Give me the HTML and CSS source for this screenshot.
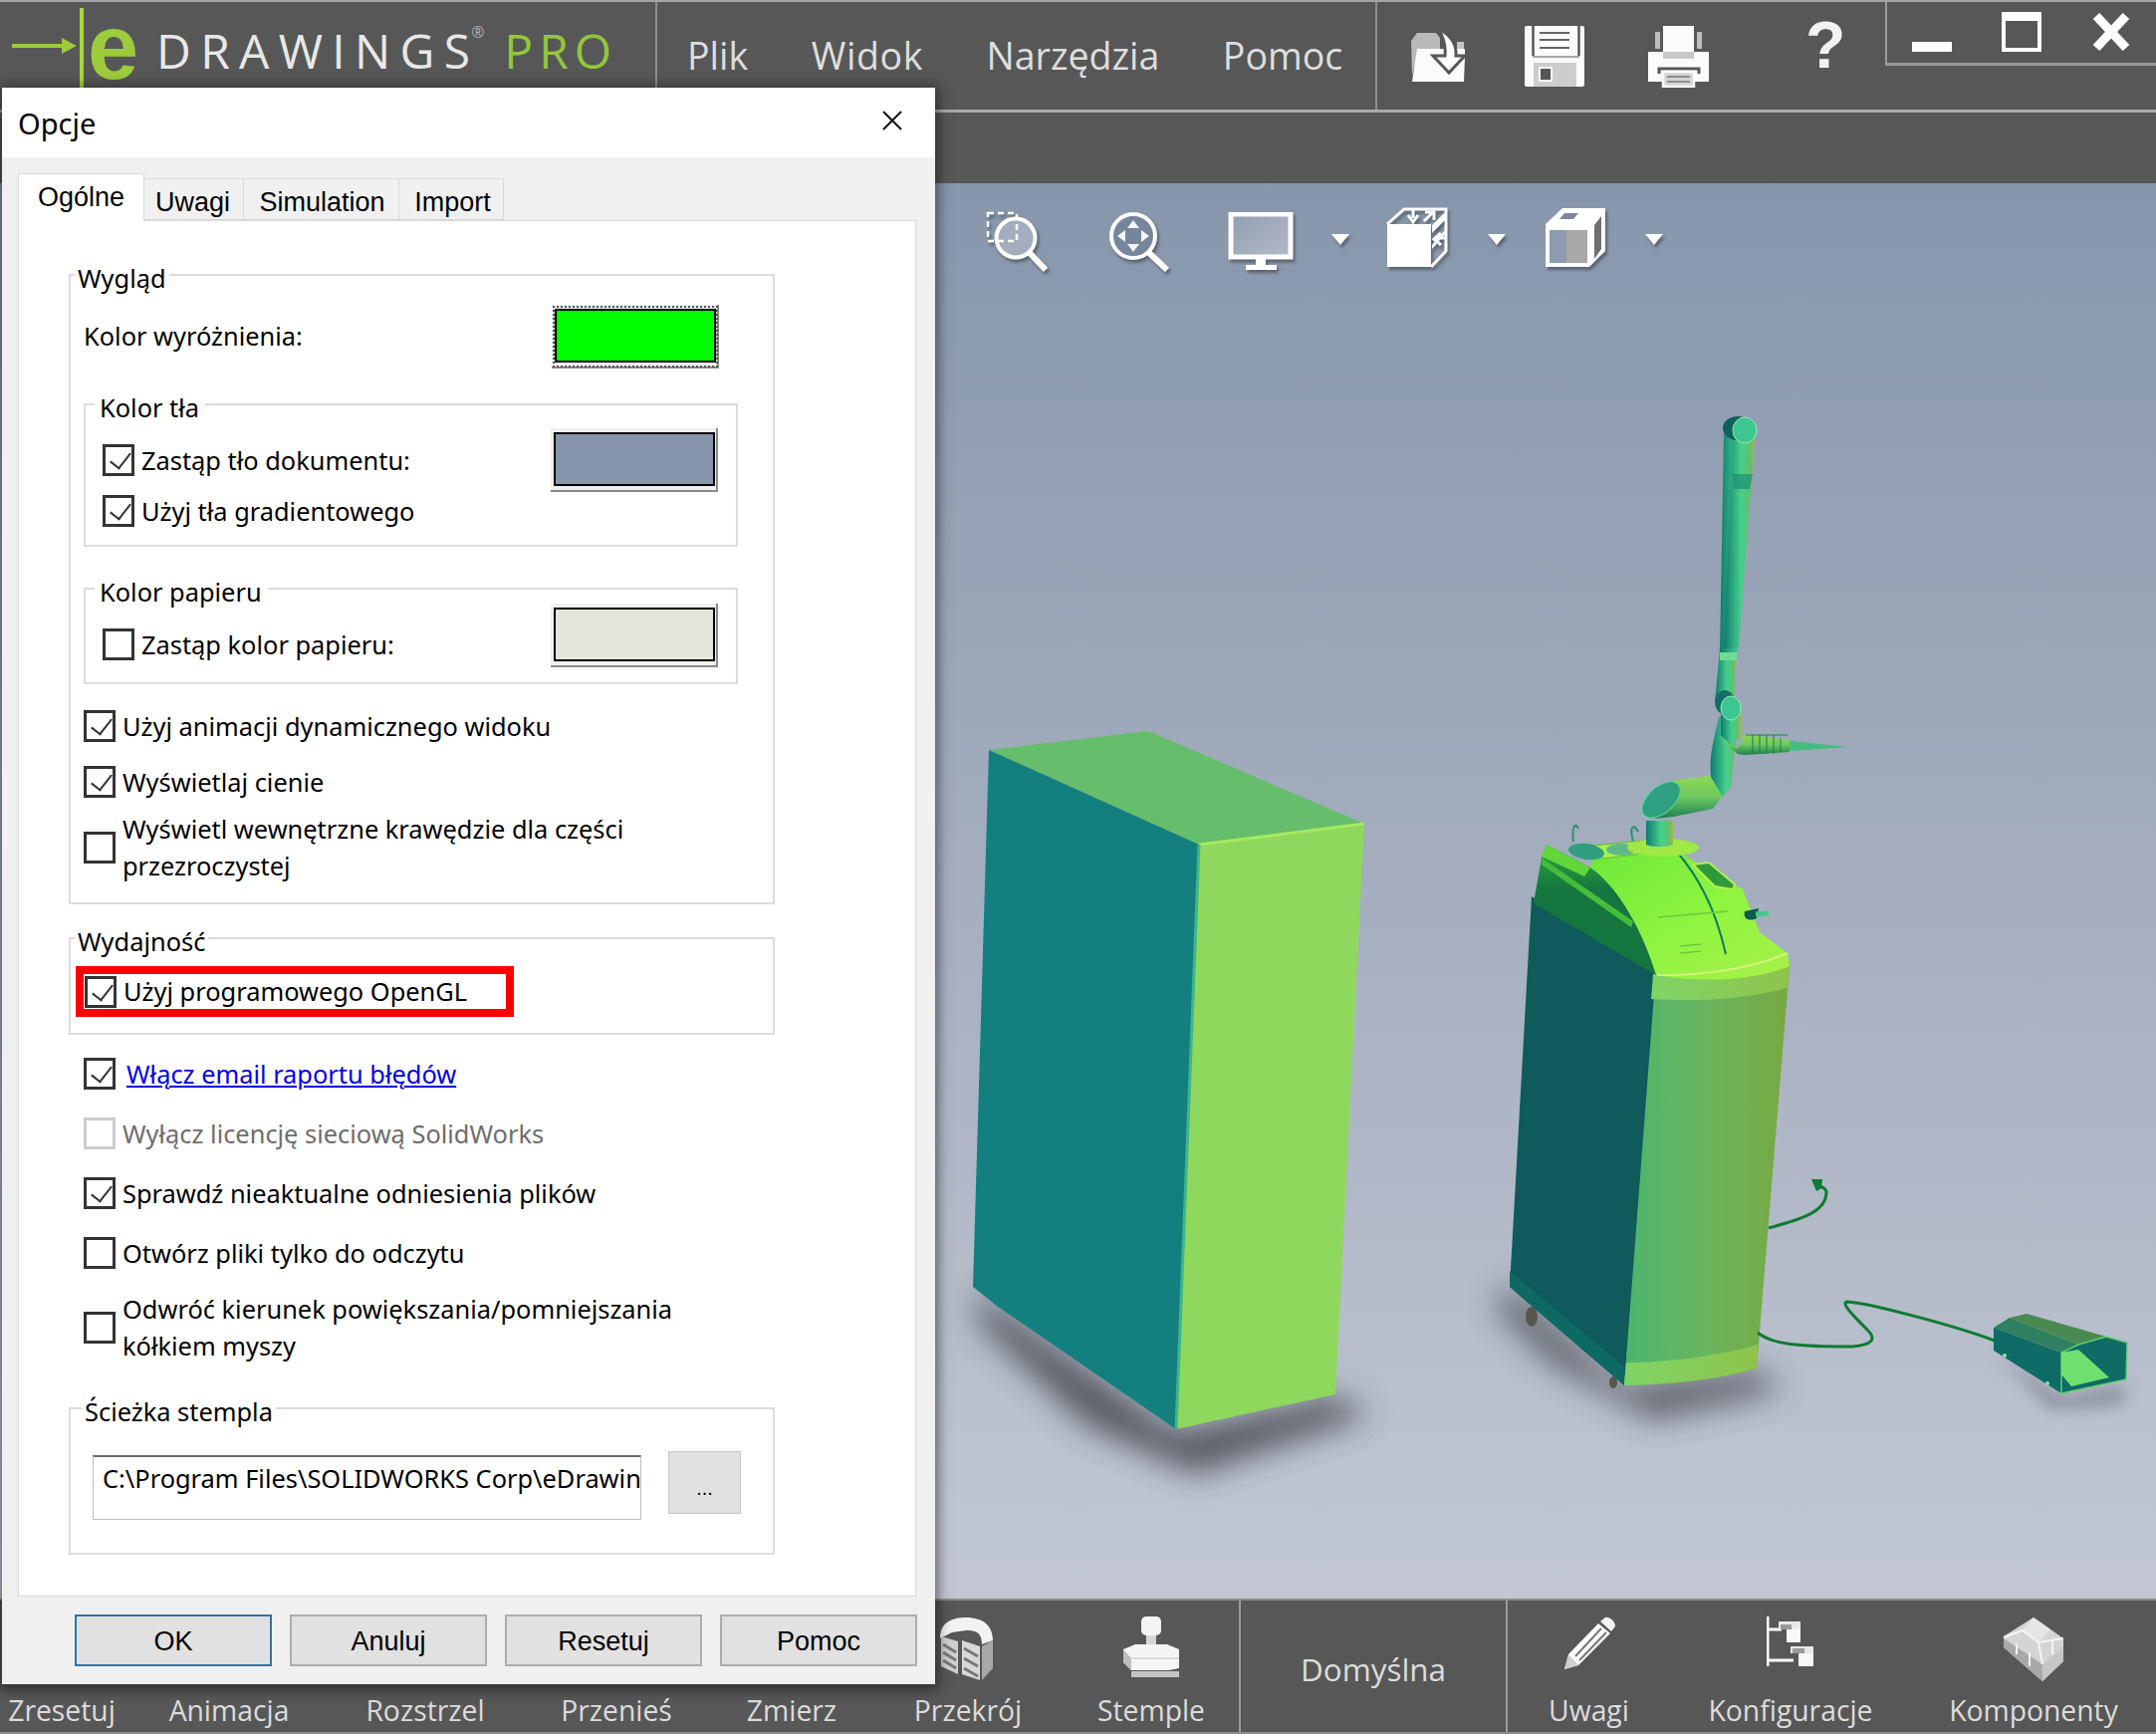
FILE: index.html
```html
<!DOCTYPE html>
<html lang="pl">
<head>
<meta charset="utf-8">
<title>eDrawings Pro - Opcje</title>
<link rel="stylesheet" href="styles.css">
</head>
<body>
<div class="app">
  <header class="topbar">
    <div class="logo">
      <svg class="logo-mark" width="74" height="82" viewBox="0 0 74 82"><path d="M0 38H54" stroke="#9ccb3b" stroke-width="4"/><path d="M50 30L65 38L50 46Z" fill="#9ccb3b"/><path d="M70 0V82" stroke="#a4d63e" stroke-width="4"/></svg>
      <span class="logo-e">e</span>
      <span class="logo-name">DRAWINGS</span><sup class="logo-reg">®</sup>
      <span class="logo-pro">PRO</span>
    </div>
    <nav class="menu"><span>Plik</span><span class="menu-wide">Widok</span><span>Narzędzia</span><span>Pomoc</span></nav>
    <div class="quick">
      <svg class="q-open" width="60" height="56" viewBox="0 0 60 56"><path d="M2 13L8 5H27L31 10V24H9L3 48Z" fill="#b9b9b9"/><path d="M48 14H55V22H48Z" fill="#c4c4c4"/><path d="M3 54L8 21H56V30L55 54Z" fill="#fbfbfb"/><path d="M29 1C41 6 48 16 47 28H56L40 45L24 28H36C37 18 34 8 29 1Z" fill="#fff" stroke="#575757" stroke-width="3"/></svg>
      <svg class="q-save" width="62" height="62" viewBox="0 0 62 62"><path d="M3 0H59Q61 0 61 2V59Q61 61 59 61H3Q1 61 1 59V2Q1 0 3 0Z" fill="#fbfbfb"/><path d="M9.500 0V30M55.500 0V30" stroke="#575757" stroke-width="2.500"/><path d="M16 7H46M16 14H46M16 22H46" stroke="#666" stroke-width="2"/><path d="M9 31H56" stroke="#8a8a8a" stroke-width="1.500"/><path d="M10 37H53V61H10Z" fill="#cdcdcd"/><path d="M15 41H29V56H15Z" fill="#fff"/><path d="M17 43H27V54H17Z" fill="#555"/></svg>
      <svg class="q-print" width="62" height="62" viewBox="0 0 62 62"><path d="M7 6H12V23H7ZM49 6H54V23H49Z" fill="#bdbdbd"/><path d="M15 0H46V26H15Z" fill="#fbfbfb"/><path d="M0 26H61V56H0Z" fill="#fbfbfb"/><path d="M15 26H46V33H15Z" fill="#c8c8c8"/><path d="M11 48V43H51V48" fill="none" stroke="#575757" stroke-width="3"/><path d="M15 46H46V61H15Z" fill="#d4d4d4" stroke="#fbfbfb" stroke-width="2.500"/><path d="M19 51H42M19 56H42" stroke="#777" stroke-width="1.500"/></svg>
      <span class="q-help">?</span>
    </div>
    <div class="winbox">
      <span class="win-min"></span>
      <span class="win-max"></span>
      <svg class="win-close" width="40" height="38" viewBox="0 0 40 38"><path d="M5 3L35 35M35 3L5 35" stroke="#fff" stroke-width="9"/></svg>
    </div>
  </header>
  <div class="subbar"></div>
  <main class="viewport">
    <svg class="scene" width="2165" height="1421" viewBox="0 184 2165 1421">
      <defs>
        <filter id="blur18" x="-30%" y="-60%" width="160%" height="220%"><feGaussianBlur stdDeviation="16"/></filter>
        <filter id="blur8" x="-30%" y="-60%" width="160%" height="220%"><feGaussianBlur stdDeviation="8"/></filter>
        <linearGradient id="bodyG" x1="0" y1="0" x2="1" y2="0"><stop offset="0" stop-color="#4cb56e"/><stop offset=".5" stop-color="#6ab55e"/><stop offset="1" stop-color="#79a840"/></linearGradient>
        <linearGradient id="trimG" x1="0" y1="0" x2="1" y2="0"><stop offset="0" stop-color="#7fd466"/><stop offset="1" stop-color="#8fc44c"/></linearGradient>
        <linearGradient id="headG" x1="0" y1="0" x2="1" y2="1"><stop offset="0" stop-color="#6fe83a"/><stop offset=".55" stop-color="#8ff540"/><stop offset="1" stop-color="#a9f04a"/></linearGradient>
        <linearGradient id="sideG" x1="0" y1="0" x2="0" y2="1"><stop offset="0" stop-color="#2fa83c"/><stop offset=".35" stop-color="#14763e"/><stop offset="1" stop-color="#14763e"/></linearGradient>
        <linearGradient id="pipeG" x1="0" y1="0" x2="1" y2="0"><stop offset="0" stop-color="#0f7a70"/><stop offset=".55" stop-color="#45cf8c"/><stop offset=".85" stop-color="#5fc070"/><stop offset="1" stop-color="#a8b83a"/></linearGradient>
        <linearGradient id="pipeH" x1="0" y1="0" x2="0" y2="1"><stop offset="0" stop-color="#8fd858"/><stop offset=".5" stop-color="#6fc85e"/><stop offset="1" stop-color="#1b7f52"/></linearGradient>
      </defs>
      <path d="M979 1296L1181 1437L1341 1402L1375 1420L1200 1480L1090 1430L985 1330Z" fill="#3a3d45" opacity=".8" filter="url(#blur18)"/>
      <path d="M1516 1292L1631 1392L1764 1376L1790 1395L1660 1425L1560 1370L1500 1310Z" fill="#3a3d45" opacity=".75" filter="url(#blur18)"/>
      <path d="M2003 1358L2070 1402L2135 1390L2130 1410L2060 1415Z" fill="#5a5f6a" opacity=".5" filter="url(#blur8)"/>

      <path d="M993 753L1153 734L1370 827L1204 848Z" fill="#66bd6c"/>
      <path d="M993 753L1204 848L1181 1435L1002 1312L977 1292Z" fill="#13807f"/>
      <path d="M1204 848L1370 827L1341 1400L1181 1435Z" fill="#8fd85e"/>
      <path d="M1204 848L1370 827" stroke="#a5ea62" stroke-width="3"/>
      <path d="M1204 848L1181 1435" stroke="#3fb58a" stroke-width="3"/>

      <ellipse cx="1538" cy="1322" rx="6" ry="10" fill="#55584a"/>
      <ellipse cx="1620" cy="1388" rx="4" ry="6" fill="#55584a"/>
      <path d="M1538 900L1666 975L1631 1391L1516 1292Z" fill="#0f5a5a"/>
      <path d="M1516 1276L1631 1372L1631 1391L1516 1292Z" fill="#0c6a62"/>
      <path d="M1662 985C1710 985 1760 980 1797 970L1764 1374C1725 1385 1680 1390 1631 1391Z" fill="url(#bodyG)"/>
      <path d="M1660 978C1710 982 1760 976 1797 964L1795 992C1750 1003 1710 1006 1658 1003Z" fill="url(#trimG)"/>
      <path d="M1633 1368C1680 1368 1730 1360 1766 1350L1764 1374C1725 1385 1680 1390 1631 1391Z" fill="url(#trimG)"/>
      <path d="M1553 848L1597 871C1625 890 1650 935 1663 979L1540 907L1548 861Z" fill="url(#sideG)"/>
      <path d="M1553 848L1597 871L1591 880L1548 860Z" fill="#62d63a"/>
      <path d="M1549 862L1640 925L1638 931L1548 868Z" fill="#46bd3b"/>
      <path d="M1597 871C1625 890 1650 935 1663 979C1710 987 1760 985 1797 970L1795 957L1767 936L1750 893L1683 854L1600 862Z" fill="url(#headG)"/>
      <path d="M1683 854C1705 880 1722 910 1733 958" fill="none" stroke="#127a5f" stroke-width="2"/>
      <path d="M1664 979C1710 980 1760 972 1795 957" fill="none" stroke="#d2f47a" stroke-width="2"/>
      <path d="M1700 868L1716 866L1742 888L1740 893L1722 890Z" fill="#2f9a3c" stroke="#b6f04c" stroke-width="2"/>
      <path d="M1752 915C1750 922 1756 926 1764 922L1766 912Z" fill="#0f5a50"/><path d="M1763 918L1776 917" stroke="#48c88a" stroke-width="5"/>
      <path d="M1665 921L1735 915M1687 950L1708 948M1687 957L1708 955" stroke="#6cc83a" stroke-width="1.500"/>
      <path d="M1580 845C1578 830 1582 825 1585 832" fill="none" stroke="#2f8f70" stroke-width="2"/>
      <path d="M1640 845C1636 830 1640 826 1645 835" fill="none" stroke="#2f8f70" stroke-width="2"/>
      <path d="M1590 850L1660 843L1690 852L1610 862Z" fill="#a8f24a" stroke="#5fb83a"/>
      <ellipse cx="1593" cy="855" rx="18" ry="8" fill="#2f9f80" transform="rotate(8 1593 855)"/>
      <ellipse cx="1628" cy="853" rx="15" ry="6" fill="#60b888"/>

      <ellipse cx="1670" cy="851" rx="36" ry="9" fill="#9fe845"/>
      <path d="M1653 824H1680V848C1672 851 1660 851 1653 848Z" fill="url(#pipeG)"/>
      <path d="M1677 784L1723 778L1733 795L1720 812L1680 820L1662 822Z" fill="url(#pipeH)"/>
      <ellipse cx="1668" cy="803" rx="23" ry="13" fill="#2fa082" transform="rotate(-42 1668 803)" stroke="#5fd8a0"/>
      <path d="M1718 780C1716 755 1722 740 1726 720H1746L1738 790L1730 800Z" fill="url(#pipeG)"/>
      <path d="M1726 740L1745 757L1752 758L1797 755L1797 743L1752 737L1744 752Z" fill="url(#pipeH)"/>
      <path d="M1753 738H1795M1760 738V757M1767 738V757M1774 738V757M1781 738V757M1788 741V755" stroke="#1b7f52" stroke-width="1"/>
      <path d="M1797 744L1857 750L1797 754Z" fill="#45bd80"/>
      <path d="M1728 712H1748V740L1738 748L1728 738Z" fill="url(#pipeG)"/>
      <path d="M1722 705L1727 650H1744L1742 705Z" fill="url(#pipeG)"/>
      <rect x="1727" y="651" width="17" height="12" fill="#72dc96"/>
      <path d="M1727 655L1731 436H1762L1745 655Z" fill="url(#pipeG)"/>
      <path d="M1731 650L1740 440H1762L1746 650Z" fill="url(#pipeG)"/>
      <path d="M1740 476H1760L1757 491H1741Z" fill="#1d8f72" opacity=".7"/>
      <ellipse cx="1745" cy="430" rx="15" ry="12" fill="#0f5f5a"/>
      <ellipse cx="1752" cy="432" rx="12" ry="13" fill="#3ec690" stroke="#9ceabc"/>
      <ellipse cx="1732" cy="705" rx="10" ry="12" fill="#0f6f68"/>
      <ellipse cx="1738" cy="711" rx="10" ry="12" fill="#3ec690" stroke="#9ceabc"/>

      <path d="M1776 1233C1805 1225 1834 1218 1834 1197C1834 1192 1828 1192 1826 1190" fill="none" stroke="#0e7a32" stroke-width="3"/>
      <path d="M1819 1184L1830 1184L1829 1193L1824 1196Z" fill="#0e7a32"/>
      <path d="M1765 1338C1780 1350 1805 1352 1860 1352C1880 1350 1885 1345 1875 1335C1860 1320 1848 1308 1855 1307C1875 1308 1960 1330 2003 1346" fill="none" stroke="#0e7a32" stroke-width="3"/>
      <path d="M2002 1333L2070 1358V1399L2002 1356Z" fill="#0f6b66"/>
      <path d="M2002 1333L2018 1323L2087 1350L2070 1358Z" fill="#2f8060"/>
      <path d="M2018 1323L2035 1319L2115 1342L2087 1350Z" fill="#4a8a50"/>
      <path d="M2087 1350L2115 1342L2136 1348L2135 1385L2070 1399L2070 1358Z" fill="#0f6b66" stroke="#5fd070" stroke-width="1.500"/>
      <path d="M2070 1358L2087 1355L2118 1383L2080 1392L2070 1380Z" fill="#6fe070"/>
      <circle cx="2013" cy="1361" r="2" fill="#8fe0b0"/><circle cx="2056" cy="1389" r="2" fill="#8fe0b0"/>
    </svg>
    <div class="viewtools">
      <svg class="vt-lens1" width="66" height="68" viewBox="0 0 66 68"><circle cx="30" cy="31" r="19.500" fill="#a3adbd" stroke="#fff" stroke-width="4"/><path d="M44 46L60 63" stroke="#fff" stroke-width="6"/><path d="M2 6H31V34H2Z" fill="none" stroke="#fff" stroke-width="2.500" stroke-dasharray="6 4"/></svg>
      <svg class="vt-lens2" width="66" height="68" viewBox="0 0 66 68"><circle cx="26" cy="29" r="22" fill="#76859b" stroke="#fff" stroke-width="4"/><path d="M42 46L60 63" stroke="#fff" stroke-width="6"/><path d="M26 13L32 21H20ZM26 45L32 37H20ZM10 29L18 23V35ZM42 29L34 23V35Z" fill="#f4f5f7"/></svg>
      <svg class="vt-mon" width="67" height="58" viewBox="0 0 67 58"><defs><linearGradient id="monG" x1="0" y1="0" x2="1" y2="1"><stop offset="0" stop-color="#919eb1"/><stop offset="1" stop-color="#b2bac8"/></linearGradient></defs><path d="M3 2H63V45H3Z" fill="url(#monG)" stroke="#fff" stroke-width="5"/><path d="M28 47H38V54H28ZM18 53H49V58H18Z" fill="#fff"/></svg>
      <svg class="vt-tri" width="18" height="11" viewBox="0 0 18 11"><path d="M0 0H18L9 11Z" fill="#fff"/></svg>
      <svg class="vt-sec" width="62" height="61" viewBox="0 0 62 61"><path d="M1 17H45V60H1Z" fill="#fff"/><path d="M1 17L18 2H60V44L45 60" fill="none" stroke="#fff" stroke-width="3"/><path d="M27 2V11M22 8L27 15L32 8M38 14L48 4M39 5H48V13M60 31H50M55 26L48 32L55 38" fill="none" stroke="#fff" stroke-width="3"/><path d="M46 18L60 4V12L46 26ZM46 38L60 22V26L46 42Z" fill="#fff"/></svg>
      <svg class="vt-tri vt-tri2" width="18" height="11" viewBox="0 0 18 11"><path d="M0 0H18L9 11Z" fill="#fff"/></svg>
      <svg class="vt-cube" width="62" height="61" viewBox="0 0 62 61"><path d="M1 17L18 1H61V44L45 60H1Z" fill="#fff"/><path d="M5 23H22V56H5Z" fill="#8e9bae"/><path d="M22 23H43V56H22Z" fill="#a8a8a8"/><path d="M20 6H34L29 12H15Z" fill="#7b8899"/><path d="M50 18L57 9V42L50 52Z" fill="#707070"/></svg>
      <svg class="vt-tri vt-tri3" width="18" height="11" viewBox="0 0 18 11"><path d="M0 0H18L9 11Z" fill="#fff"/></svg>
    </div>
  </main>
  <footer class="bottombar">
    <div class="bgroup bgroup-main">
      <div class="bitem"><span>Zresetuj</span></div>
      <div class="bitem"><span>Animacja</span></div>
      <div class="bitem"><span>Rozstrzel</span></div>
      <div class="bitem"><span>Przenieś</span></div>
      <div class="bitem"><span>Zmierz</span></div>
      <div class="bitem">
        <svg class="b-sec" width="56" height="66" viewBox="0 0 56 66"><path d="M2 22C2 6 14 1 28 1C46 1 55 10 55 24L44 28C44 16 38 14 28 14L14 16Z" fill="#f2f2f2"/><path d="M3 20L20 25V58L3 50Z" fill="#cfcfcf"/><path d="M24 24L42 30V64L24 58Z" fill="#d8d8d8"/><path d="M44 30L55 24V52L44 64Z" fill="#a8a8a8"/><path d="M5 28L18 36M5 36L18 44M5 44L18 52M26 32L40 40M26 42L40 50M26 52L40 60" stroke="#777" stroke-width="3"/></svg>
        <span>Przekrój</span>
      </div>
      <div class="bitem">
        <svg width="58" height="62" viewBox="0 0 58 62"><rect x="19" y="0" width="20" height="19" rx="5" fill="#f4f4f4"/><path d="M24 19H34V34L38 40H20L24 34Z" fill="#d6d6d6"/><path d="M1 33L13 28H45L57 33V52L47 54H9L1 46Z" fill="#f5f5f5"/><path d="M1 33L9 42V54L1 46Z" fill="#bdbdbd"/><path d="M9 42H57" stroke="#bdbdbd" stroke-width="1"/><path d="M9 55H57V61H9Z" fill="#c4c4c4"/></svg>
        <span>Stemple</span>
      </div>
    </div>
    <div class="bgroup bgroup-view"><span>Domyślna</span></div>
    <div class="bgroup bgroup-side">
      <div class="bitem">
        <svg width="54" height="54" viewBox="0 0 54 54"><path d="M38 5L43 1C47 0 53 5 53 10L49 15Z" fill="#f2f2f2"/><path d="M36 7L48 17L16 49L2 53L6 38Z" fill="#fff"/><path d="M39 12L13 40M44 16L17 44" stroke="#777" stroke-width="2"/><path d="M6 38L16 49L2 53Z" fill="#cfcfcf"/></svg>
        <span>Uwagi</span>
      </div>
      <div class="bitem">
        <svg width="48" height="50" viewBox="0 0 48 50"><path d="M1 0V50" stroke="#fff" stroke-width="3"/><path d="M2 13H15M2 44H27" stroke="#fff" stroke-width="3"/><path d="M12 5H34V26H20V13H12Z" fill="#e8e8e8"/><path d="M14 8H25V13H14Z" fill="#9a9a9a"/><path d="M20 13H34V26H20Z" fill="#f8f8f8"/><path d="M24 30H47V50H32V37H24Z" fill="#e8e8e8"/><path d="M32 37H47V50H32Z" fill="#f8f8f8"/><path d="M26 32H38V37H26Z" fill="#9a9a9a"/></svg>
        <span>Konfiguracje</span>
      </div>
      <div class="bitem">
        <svg width="62" height="66" viewBox="0 0 62 66"><path d="M31 1L61 22V45L40 65L1 31V20Z" fill="#d4d4d4"/><path d="M1 22L40 48V65L1 31Z" fill="#a9a9a9"/><path d="M40 48L61 30V45L40 65Z" fill="#c6c6c6"/><path d="M20 14L31 1L48 13L36 26Z" fill="#e6e6e6"/><path d="M1 21L20 14L36 26L40 48M36 26L61 22M14 27L14 38M27 36L27 50M50 24V38" fill="none" stroke="#f4f4f4" stroke-width="2"/></svg>
        <span>Komponenty</span>
      </div>
    </div>
  </footer>

  <section class="dialog">
    <div class="dlg-title"><span>Opcje</span>
      <svg width="20" height="20" viewBox="0 0 20 20"><path d="M1 1L19 19M19 1L1 19" stroke="#111" stroke-width="2"/></svg>
    </div>
    <div class="dlg-body">
      <div class="tabs">
        <span class="tab tab-active">Ogólne</span>
        <span class="tab tab-uwagi">Uwagi</span>
        <span class="tab tab-sim">Simulation</span>
        <span class="tab tab-imp">Import</span>
      </div>
      <div class="panel">
        <fieldset class="group group-look">
          <legend>Wygląd</legend>
          <div class="row-color"><span>Kolor wyróżnienia:</span><span class="swatch swatch-focus"><i class="fill-green"></i></span></div>
          <fieldset class="subgroup sub-bg">
            <legend>Kolor tła</legend>
            <div class="sub-flex">
              <div class="sub-checks">
                <label class="check"><span class="cb on"></span>Zastąp tło dokumentu:</label>
                <label class="check"><span class="cb on"></span>Użyj tła gradientowego</label>
              </div>
              <span class="swatch"><i class="fill-blue"></i></span>
            </div>
          </fieldset>
          <fieldset class="subgroup sub-paper">
            <legend>Kolor papieru</legend>
            <div class="sub-flex">
              <div class="sub-checks">
                <label class="check"><span class="cb"></span>Zastąp kolor papieru:</label>
              </div>
              <span class="swatch"><i class="fill-paper"></i></span>
            </div>
          </fieldset>
          <label class="check look-a"><span class="cb on"></span>Użyj animacji dynamicznego widoku</label>
          <label class="check look-b"><span class="cb on"></span>Wyświetlaj cienie</label>
          <label class="check two look-c"><span class="cb"></span><span>Wyświetl wewnętrzne krawędzie dla części<br>przezroczystej</span></label>
        </fieldset>
        <fieldset class="group group-perf">
          <legend>Wydajność</legend>
          <div class="redbox"><label class="check"><span class="cb on"></span>Użyj programowego OpenGL</label></div>
        </fieldset>
        <div class="loose">
          <label class="check l-a"><span class="cb on"></span><a class="link" href="#">Włącz email raportu błędów</a></label>
          <label class="check l-b off"><span class="cb"></span>Wyłącz licencję sieciową SolidWorks</label>
          <label class="check l-c"><span class="cb on"></span>Sprawdź nieaktualne odniesienia plików</label>
          <label class="check l-d"><span class="cb"></span>Otwórz pliki tylko do odczytu</label>
          <label class="check two l-e"><span class="cb"></span><span>Odwróć kierunek powiększania/pomniejszania<br>kółkiem myszy</span></label>
        </div>
        <fieldset class="group group-path">
          <legend>Ścieżka stempla</legend>
          <div class="path-row">
            <div class="path-input">C:\Program Files\SOLIDWORKS Corp\eDrawin</div>
            <button class="path-btn" type="button">...</button>
          </div>
        </fieldset>
      </div>
      <div class="dlg-buttons">
        <button class="btn btn-default" type="button">OK</button>
        <button class="btn" type="button">Anuluj</button>
        <button class="btn" type="button">Resetuj</button>
        <button class="btn" type="button">Pomoc</button>
      </div>
    </div>
  </section>
</div>
</body>
</html>
```
FILE: styles.css
```css
* { box-sizing: border-box; }
html, body { margin: 0; padding: 0; }
body { width: 2165px; height: 1741px; overflow: hidden; font-family: "Noto Sans", sans-serif; }
svg { display: block; flex: none; }

.app { position: relative; width: 2165px; height: 1741px; display: flex; flex-direction: column; background: #575757; overflow: hidden; }

/* top bar */
.topbar { height: 113px; flex: none; display: flex; background: #575757; border-top: 2px solid #a3a3a3; border-bottom: 3px solid #a9a9a9; color: #dedede; }
.logo { width: 660px; flex: none; display: flex; align-items: flex-start; border-right: 2px solid #8f8f8f; padding-left: 12px; color: #e8e8e8; }
.logo-mark { margin-top: 6px; }
.logo-e { font-family: "Liberation Sans", sans-serif; font-weight: 700; font-size: 92px; line-height: 90px; height: 90px; color: #9ccb3b; margin-left: 2px; width: 56px; }
.logo-name { font-family: "Open Sans", sans-serif; font-weight: 400; font-size: 48px; letter-spacing: 9.300px; line-height: 66px; margin-left: 13px; margin-top: 16px; white-space: nowrap; }
.logo-reg { width: 12px; margin-top: 22px; margin-left: -8px; font-size: 16px; line-height: 16px; color: #aaa; }
.logo-pro { font-family: "Open Sans", sans-serif; font-weight: 400; font-size: 48px; letter-spacing: 6px; line-height: 66px; margin-left: 21px; margin-top: 16px; color: #92c63c; }
.menu { width: 723px; flex: none; display: flex; gap: 63.500px; padding: 29px 0 0 30px; font-family: "Open Sans", sans-serif; font-size: 37.500px; line-height: 50px; border-right: 2px solid #8f8f8f; white-space: nowrap; }
.menu-wide { letter-spacing: .6px; }
.quick { width: 510px; flex: none; display: flex; align-items: flex-start; padding-left: 32px; }
.q-open { margin-top: 26px; }
.q-save { margin-top: 24px; margin-left: 55px; }
.q-print { margin-top: 24px; margin-left: 63px; }
.q-help { margin-left: 96px; margin-top: 5px; font-family: "Liberation Sans", sans-serif; font-weight: 700; font-size: 66px; line-height: 76px; color: #f2f2f2; }
.winbox { flex: 1; height: 64px; display: flex; align-items: flex-start; border-left: 2px solid #9a9a9a; border-bottom: 3px solid #9a9a9a; padding-left: 25px; }
.win-min { width: 40px; height: 10px; margin-top: 40px; background: #fff; }
.win-max { width: 40px; height: 40px; margin-top: 10px; margin-left: 50px; border: 4px solid #fff; border-top-width: 9px; }
.win-close { margin-top: 11px; margin-left: 50px; }

.subbar { height: 71px; flex: none; background: #575757; }

/* viewport */
.viewport { position: relative; flex: none; height: 1421px; background: linear-gradient(#8796ab, #c2c7d3); }
.scene { position: absolute; left: 0; top: 0; }
.viewtools { position: relative; display: flex; align-items: flex-start; padding: 24px 0 0 990px; }
.viewtools svg { filter: drop-shadow(2px 3px 1.5px rgba(50,55,65,.55)); }
.vt-lens2 { margin-left: 56px; }
.vt-mon { margin-left: 55px; margin-top: 5px; }
.vt-tri { margin-left: 37px; margin-top: 27px; }
.vt-tri2 { margin-left: 40px; }
.vt-tri3 { margin-left: 39px; }
.vt-sec { margin-left: 37px; }
.vt-cube { margin-left: 39px; }

/* bottom bar */
.bottombar { flex: none; height: 136px; display: flex; background: #575757; border-top: 2px solid #8b8b8b; border-bottom: 2px solid #8b8b8b; color: #dcdcdc; font-family: "Open Sans", sans-serif; font-size: 28.300px; line-height: 42px; white-space: nowrap; }
.bgroup { height: 100%; }
.bgroup-main { width: 1246px; flex: none; display: grid; grid-template-columns: 124px 212px 182px 202px 150px 204px 164px; border-right: 2px solid #9b9b9b; }
.bgroup-view { width: 268px; flex: none; display: flex; align-items: center; justify-content: center; border-right: 2px solid #9b9b9b; padding-top: 6px; font-size: 31.400px; }
.bgroup-side { flex: 1; display: grid; grid-template-columns: 163px 242px 246px; }
.bitem { height: 100%; display: flex; flex-direction: column; align-items: center; justify-content: flex-end; padding-bottom: 1px; }
.bitem svg { margin-bottom: auto; margin-top: 16px; }
.bitem .b-sec { margin-left: -4px; }

/* dialog */
.dialog { position: absolute; left: 2px; top: 88px; width: 937px; height: 1603px; display: flex; flex-direction: column; background: #f0f0f0; box-shadow: 0 2px 12px 3px rgba(0,0,0,.5); color: #000; font-size: 25.400px; line-height: 37px; }
.dlg-title { height: 70px; flex: none; background: #fff; display: flex; align-items: center; justify-content: space-between; padding: 0 33px 0 16px; font-size: 29px; }
.dlg-title svg { margin-top: -4px; }
.dlg-body { flex: 1; display: flex; flex-direction: column; padding: 16px 18px 0 16px; }
.tabs { display: flex; align-items: flex-end; height: 47px; flex: none; font-family: "Liberation Sans", sans-serif; font-size: 27px; }
.tab { height: 42px; border: 1px solid #d9d9d9; border-left: 0; background: #f0f0f0; display: flex; align-items: center; justify-content: center; padding-top: 6px; }
.tab-active { width: 127px; height: 48px; background: #fff; border-left: 1px solid #d9d9d9; border-bottom: 0; margin-bottom: -1px; position: relative; z-index: 1; padding-top: 0; padding-bottom: 1px; }
.tab-uwagi { width: 100px; padding-right: 2px; }
.tab-sim { width: 156px; padding-left: 2px; }
.tab-imp { width: 105px; padding-left: 3px; }
.panel { height: 1382px; flex: none; width: 902px; background: #fff; border: 1px solid #d9d9d9; padding: 0 0 0 50px; }

fieldset { margin: 0; padding: 0; min-width: 0; border: 2px solid #dcdcdc; }
legend { padding: 6px 4px 0 4px; line-height: 30px; white-space: nowrap; }
.group { width: 709px; }
.group > legend { padding-left: 3px; padding-right: 3px; }
.group-look { margin-top: 36px; padding: 0 0 18px 13px; }
.group-look > legend { margin-left: -9px; }
.row-color { display: flex; justify-content: space-between; align-items: center; width: 638px; margin-top: 12px; height: 63px; }
.subgroup { width: 657px; }
.subgroup > legend { margin-left: -8px; padding-left: 5px; padding-right: 6px; }
.sub-bg { margin-top: 19px; padding: 0 18px 18px 17px; }
.sub-paper { margin-top: 24px; padding: 0 18px 15px 17px; }
.sub-flex { display: flex; justify-content: space-between; align-items: flex-start; }
.sub-bg .sub-flex .swatch { margin-top: 6px; }
.sub-paper .sub-flex .swatch { margin-top: -3px; }
.sub-checks { display: flex; flex-direction: column; gap: 19px; margin-top: 22px; }

.swatch { width: 168px; height: 64px; flex: none; display: block; padding: 4px 1px 4px 3px; background: #f0f0f0; border-right: 2px solid #8a8a8a; border-bottom: 2px solid #8a8a8a; }
.swatch-focus { outline: 2px dotted #555; outline-offset: -3px; }
.swatch i { display: block; width: 100%; height: 100%; border: 2px solid #000; }
.fill-green { background: #00ff00; }
.fill-blue { background: #8796ab; }
.fill-paper { background: #e5e5dc; }

.check { display: flex; align-items: center; height: 32px; white-space: nowrap; }
.check.two { height: 74px; }
.cb { position: relative; width: 32px; height: 32px; flex: none; border: 3px solid #333; background: #fff; margin-right: 7px; }
.cb.on::after { content: ""; position: absolute; left: 9px; top: 1px; width: 10px; height: 18px; border-right: 2px solid #333; border-bottom: 2px solid #333; transform: rotate(38deg); }
.look-a { margin-top: 26px; }
.look-b { margin-top: 24px; }
.look-c { margin-top: 13px; }
.group-perf { margin-top: 16px; padding: 10px 0 16px 5px; }
.group-perf > legend { margin-left: -1px; }
.redbox { width: 440px; height: 51px; border: 8px solid #f00; padding-left: 1px; display: flex; align-items: center; }
.redbox .cb { margin-right: 7px; }
.loose { margin-left: 15px; }
.l-a { margin-top: 23px; }
.l-a .cb { margin-right: 11px; }
.l-b { margin-top: 28px; }
.l-c { margin-top: 28px; }
.l-d { margin-top: 28px; }
.l-e { margin-top: 22px; }
.off { color: #6d6d6d; }
.off .cb { border-color: #ccc; }
.link { color: #0000e6; text-decoration: underline; }
.group-path { margin-top: 26px; padding: 25px 0 33px 22px; }
.group-path > legend { margin-left: -11px; }
.path-row { display: flex; align-items: flex-start; }
.path-input { width: 551px; height: 65px; margin-top: 4px; padding: 3px 0 0 9px; overflow: hidden; white-space: nowrap; border: 1px solid #bdbdbd; border-top: 2px solid #6a6a6a; }
.path-btn { width: 73px; height: 63px; margin-left: 27px; background: #e1e1e1; border: 1px solid #c8c8c8; font-family: "Liberation Sans", sans-serif; font-size: 20px; padding: 12px 0 0; }

.dlg-buttons { display: flex; gap: 18px; padding: 18px 0 0 57px; }
.btn { width: 198px; height: 52px; background: #e1e1e1; border: 2px solid #adadad; font-family: "Liberation Sans", sans-serif; font-size: 27px; color: #000; padding: 2px 0 0; }
.btn-default { border-color: #2a73b0; }
```
